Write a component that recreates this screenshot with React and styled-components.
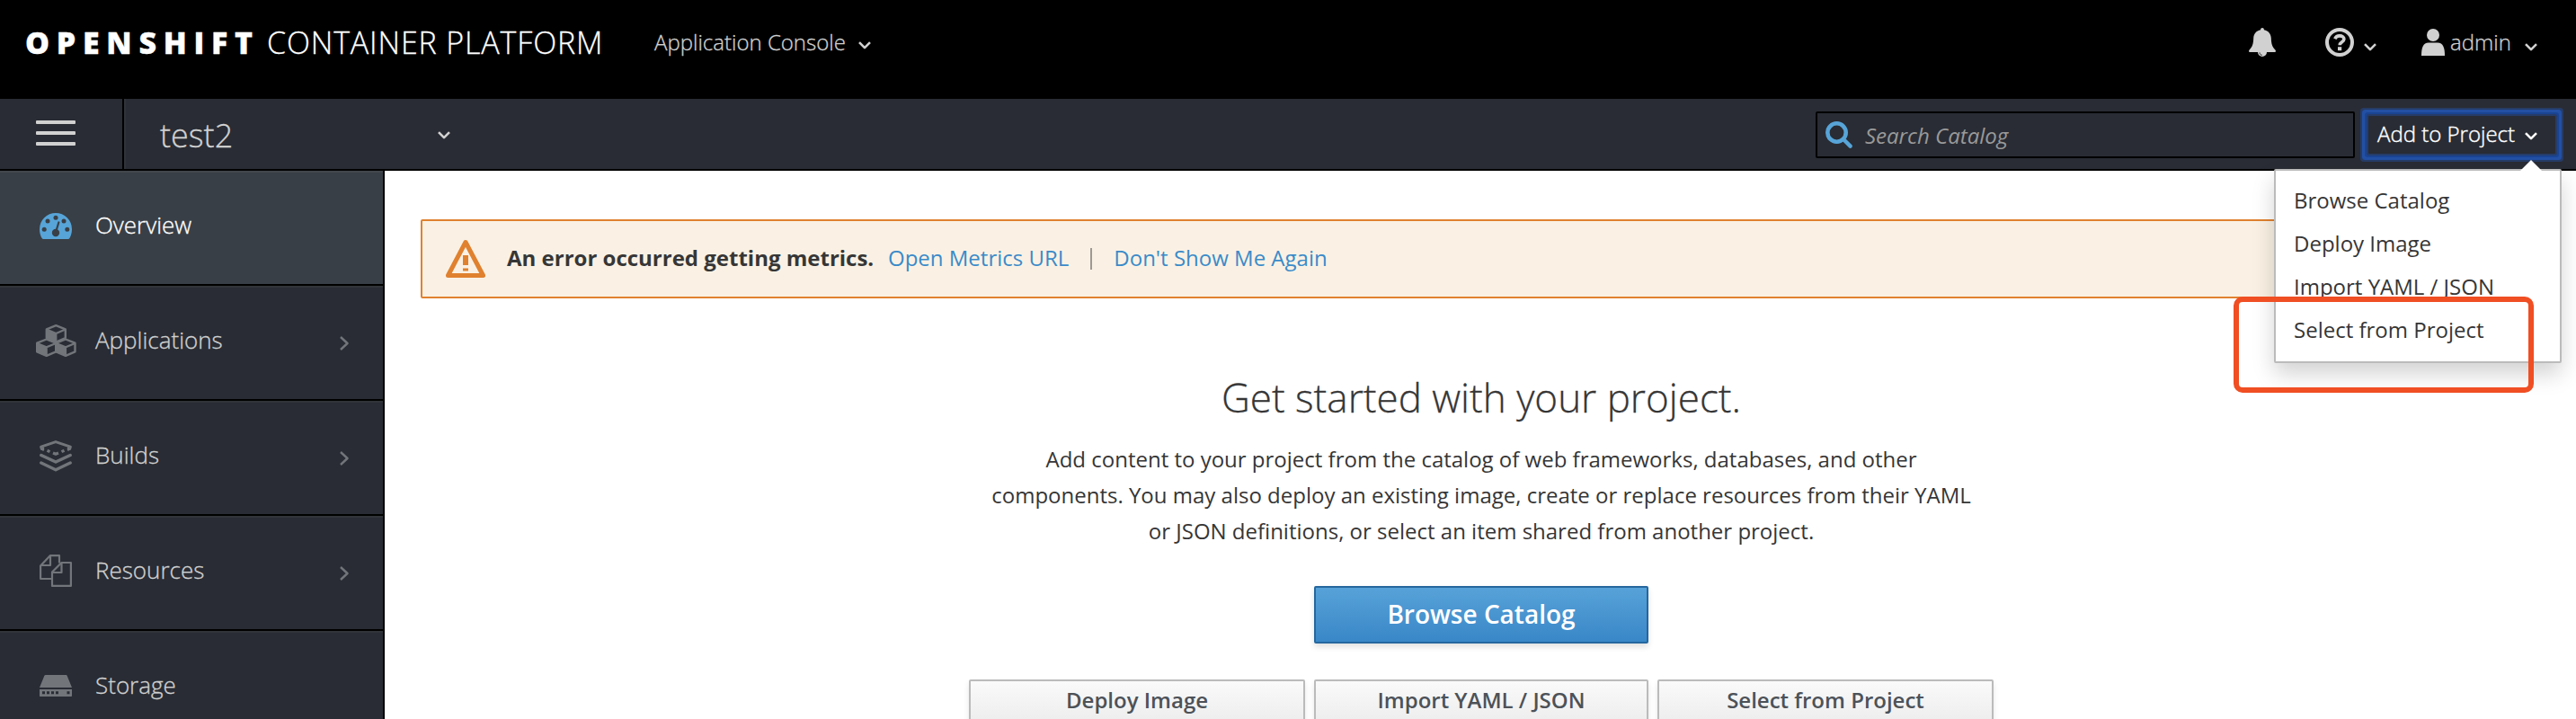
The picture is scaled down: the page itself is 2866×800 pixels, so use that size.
import React from "react";
import styled, { createGlobalStyle } from "styled-components";

const GlobalStyle = createGlobalStyle`
  *, *::before, *::after { box-sizing: border-box; }
  html, body { margin: 0; padding: 0; height: 100%; }
  body {
    overflow: hidden;
    background: #fff;
    color: #333;
    font-family: "Open Sans", "Noto Sans", sans-serif;
    font-size: 24px;
    line-height: 40px;
  }
  button, input { font: inherit; color: inherit; }
`;

const Page = styled.div`
  display: flex;
  flex-direction: column;
  height: 800px;
  overflow: hidden;
`;

const Masthead = styled.header`
  display: flex;
  align-items: center;
  flex: none;
  height: 110px;
  padding: 0 43px 16px 28px;
  background: #000;
  color: #d1d1d1;
  font-weight: 300;
  -webkit-text-stroke: 0.3px currentColor;
`;

const Brand = styled.div`
  display: flex;
  width: 700px;
  color: #fff;
  font-size: 34px;
  white-space: nowrap;
`;

const BrandStrong = styled.span`
  width: 269px;
  font-weight: 800;
  letter-spacing: 7.7px;
`;

const BrandLight = styled.span`
  font-weight: 300;
  letter-spacing: 0.85px;
`;

const ConsoleSwitch = styled.div`
  display: flex;
  align-items: center;
  gap: 14px;
  white-space: nowrap;
`;

const Utilities = styled.div`
  display: flex;
  align-items: center;
  margin-left: auto;
`;

const Utility = styled.div`
  display: flex;
  align-items: center;
  margin-left: ${(p) => p.$before || 0}px;
`;

const UserName = styled.span`
  width: 83px;
  margin-left: 6px;
`;

const Toolbar = styled.div`
  display: flex;
  align-items: center;
  flex: none;
  height: 80px;
  padding-right: 15px;
  background: #292c34;
  border-bottom: 2px solid #000;
`;

const MenuToggle = styled.div`
  display: flex;
  flex-direction: column;
  gap: 8px;
  width: 138px;
  height: 78px;
  padding: 24px 0 0 40px;
  border-right: 2px solid #000;
`;

const Bar = styled.span`
  width: 44px;
  height: 4px;
  border-radius: 1px;
  background: #d1d1d1;
`;

const ProjectPicker = styled.div`
  display: flex;
  align-items: center;
  justify-content: space-between;
  width: 363px;
  height: 78px;
  padding: 3px 0 0 38px;
  border-left: 2px solid #303339;
  color: #d1d1d1;
  font-size: 36px;
  font-weight: 300;
  -webkit-text-stroke: 0.3px currentColor;
`;

const SearchBox = styled.label`
  display: flex;
  align-items: center;
  width: 600px;
  height: 52px;
  margin: 2px 15px 0 auto;
  padding-left: 9px;
  border: 2px solid #000;
  border-radius: 2px;
`;

const SearchInput = styled.input`
  flex: 1;
  min-width: 0;
  height: 44px;
  margin-left: 14px;
  padding: 0;
  border: 0;
  outline: 0;
  background: transparent;
  &::placeholder { color: #999; font-style: italic; opacity: 1; }
`;

const AddWrap = styled.div`
  position: relative;
  width: 208px;
  margin: 2px 8px 0 0;
`;

const AddButton = styled.button`
  display: flex;
  align-items: center;
  justify-content: space-between;
  width: 208px;
  height: 42px;
  padding: 0 20px 2px 10px;
  border: 0;
  background: #292c34;
  color: #fff;
  white-space: nowrap;
  font-weight: 300;
  -webkit-text-stroke: 0.4px currentColor;
  box-shadow: 0 0 0 2px #263c68, 0 0 0 4px #1a4493, 0 0 0 7px #2350a4, 0 0 0 9px #263c66;
  border-radius: 1px;
`;

const Menu = styled.ul`
  position: absolute;
  z-index: 5;
  top: 59px;
  right: -7px;
  width: 320px;
  height: 216px;
  margin: 0;
  padding: 9px 0 11px 20px;
  list-style: none;
  background: #fff;
  border: 2px solid #bbb;
  border-radius: 2px;
  box-shadow: 0 12px 24px rgba(0, 0, 0, 0.175);
  color: #363636;
`;

const MenuArrow = styled.svg`
  position: absolute;
  top: -12px;
  right: 20px;
  display: block;
`;

const MenuItem = styled.li`
  height: 48px;
  line-height: 48px;
`;

const Highlight = styled.div`
  position: absolute;
  z-index: 6;
  top: 201px;
  left: -150px;
  width: 334px;
  height: 107px;
  border: 6px solid #f04e23;
  border-radius: 10px;
`;

const Body = styled.div`
  display: flex;
  flex: 1;
  min-height: 0;
`;

const Sidebar = styled.nav`
  flex: none;
  width: 428px;
  background: #292c34;
  border-right: 2px solid #000;
  overflow: hidden;
`;

const NavItem = styled.div`
  display: flex;
  align-items: center;
  height: 128px;
  padding: 0 38px 6px 36px;
  border-top: 2px solid ${(p) => (p.$active ? "#42474d" : "#313439")};
  border-bottom: 2px solid #000;
  background: ${(p) => (p.$active ? "#393f46" : "#292c34")};
  color: ${(p) => (p.$active ? "#fff" : "#d1d1d1")};
  font-size: 26px;
  font-weight: 300;
  -webkit-text-stroke: 0.3px currentColor;
`;

const NavIcon = styled.span`
  display: flex;
  align-items: center;
  justify-content: center;
  width: 52px;
  height: 40px;
  color: ${(p) => (p.$active ? "#57a4d8" : "#72767b")};
`;

const NavLabel = styled.span`
  flex: 1;
  margin: -2px 0 0 18px;
`;

const Chevron = styled.svg`
  margin-top: 5px;
`;

const Main = styled.main`
  flex: 1;
  min-width: 0;
  padding: 54px 40px 0;
`;

const Alert = styled.div`
  display: flex;
  align-items: center;
  height: 88px;
  padding-left: 26px;
  border: 2px solid #e0812f;
  border-radius: 2px;
  background: #faf1e4;
  white-space: nowrap;
`;

const AlertText = styled.strong`
  width: 424px;
  margin: -3px 0 0 24px;
  color: #363636;
  font-weight: 700;
`;

const AlertLink = styled.a`
  margin-top: -3px;
  color: #3a8bc9;
`;

const Divider = styled.span`
  width: 2px;
  height: 24px;
  margin: 0 24px 0 24px;
  background: #9c9893;
`;

const Hero = styled.section`
  width: 1142px;
  margin: 80px auto 0;
  padding-left: 2px;
  text-align: center;
  color: #363636;
`;

const HeroTitle = styled.h1`
  margin: 0 0 19px;
  font-size: 44px;
  font-weight: 300;
  line-height: 60px;
  -webkit-text-stroke: 0.3px currentColor;
`;

const HeroLine = styled.span`
  display: block;
  white-space: nowrap;
`;

const HeroText = styled.p`
  margin: 0 0 41px;
  line-height: 40px;
`;

const ActionGrid = styled.div`
  display: grid;
  grid-template-columns: 374px 372px 374px;
  justify-content: center;
  column-gap: 10px;
`;

const PrimaryRow = styled(ActionGrid)`
  margin-bottom: 40px;
`;

const PrimaryButton = styled.button`
  grid-column: 2;
  height: 64px;
  padding: 0 0 2px;
  border: 2px solid #25679e;
  border-radius: 2px;
  background: linear-gradient(#57a2d8, #3a87c8);
  box-shadow: 0 4px 6px rgba(3, 3, 3, 0.12);
  color: #fff;
  font-size: 28px;
  font-weight: 600;
`;

const SecondaryButton = styled.button`
  height: 56px;
  padding: 0 0 11px;
  border: 2px solid #bbb;
  border-radius: 2px;
  background: linear-gradient(#fafafa, #ebebeb);
  box-shadow: 0 4px 6px rgba(3, 3, 3, 0.1);
  color: #4d5258;
  font-weight: 600;
`;

const CaretSvg = styled.svg`
  flex: none;
  margin-top: ${(p) => p.$drop}px;
  margin-left: ${(p) => p.$before}px;
`;

function Caret({ drop = 0, before = 0 }) {
  return (
    <CaretSvg $drop={drop} $before={before} width="14" height="9" viewBox="0 0 14 9" fill="none" stroke="currentColor" strokeWidth="2.6">
      <path d="M1 1.2 7 7.2 13 1.2" strokeLinejoin="round" />
    </CaretSvg>
  );
}

const BellIcon = () => (
  <svg width="30" height="32" viewBox="0 0 30 32" fill="currentColor">
    <path d="M15 0c1.2 0 2 .9 1.9 2.2C21.8 3 24.6 6.800 24.800 11.500 25 18 26.200 21.500 29.400 24.400 30.400 25.500 30 27 28.600 27H20a5 5 0 0 1-10 0H1.400C0 27-.4 25.500.6 24.400 3.800 21.500 5 18 5.200 11.500 5.400 6.800 8.200 3 13.100 2.200 13 .9 13.800 0 15 0z" />
    <path d="M12 27.400c0 1.800 1.200 2.900 2.800 2.900" fill="none" stroke="#000" strokeWidth="0.800" />
  </svg>
);

const HelpIcon = () => (
  <svg width="32" height="32" viewBox="0 0 32 32" fill="none" stroke="currentColor">
    <circle cx="16" cy="16" r="14" strokeWidth="4" />
    <path d="M10.800 12.200C11.800 9.800 13.600 8.900 16 8.900c2.900 0 4.900 1.500 4.900 3.700 0 3.400-4.700 3-4.700 6.700" strokeWidth="3.600" />
    <path d="M14 21.200h4.200v4h-4.200z" fill="currentColor" stroke="none" />
  </svg>
);

const UserIcon = () => (
  <svg width="26" height="30" viewBox="0 0 26 30" fill="currentColor">
    <ellipse cx="13" cy="7" rx="7" ry="7" />
    <path d="M0 30c0-9 1.800-14.500 8-14.500h10c6.200 0 8 5.500 8 14.500z" />
  </svg>
);

const SearchIcon = () => (
  <svg width="30" height="30" viewBox="0 0 30 30" fill="none" stroke="#57a4d8">
    <circle cx="12.500" cy="12.500" r="10.200" strokeWidth="4.600" />
    <path d="M20 20 27.600 27.600" strokeWidth="4.400" strokeLinecap="round" />
  </svg>
);

const WarningIcon = () => (
  <svg width="44" height="44" viewBox="0 0 44 44" fill="none" stroke="#e0812f">
    <path d="M22 3.500 41.500 40.500H2.500z" strokeWidth="5" strokeLinejoin="round" />
    <path d="M19 18h6v11h-6zM19 32.500h6v3h-6z" fill="#e0812f" stroke="none" />
  </svg>
);

const GaugeIcon = () => (
  <svg width="36" height="29" viewBox="0 0 36 29" fill="currentColor">
    <path d="M18 0a18 18 0 0 1 18 18c0 4-1.100 7.500-2.600 10-.4.700-.9 1-1.700 1H4.300c-.8 0-1.300-.3-1.700-1C1.100 25.500 0 22 0 18A18 18 0 0 1 18 0z" />
    <g fill="#393f46">
      <circle cx="18" cy="5.200" r="2.500" />
      <circle cx="9" cy="9" r="2.500" />
      <circle cx="27" cy="9" r="2.500" />
      <circle cx="5.200" cy="18.200" r="2.500" />
      <circle cx="30.800" cy="18.200" r="2.500" />
      <circle cx="18" cy="22" r="4.200" />
    </g>
    <path d="M18.500 20 21.300 10.500" stroke="#393f46" strokeWidth="2.200" strokeLinecap="round" />
  </svg>
);

const Cube = ({ x, y }) => (
  <g transform={`translate(${x} ${y})`}>
    <path d="M11.500 1 22 5.200v9.600L11.500 19.300 1 14.800V5.200z" fill="none" stroke="currentColor" strokeWidth="2.4" strokeLinejoin="round" />
    <path d="M1 5.200 11.500 9.800v9.500L1 14.800z" fill="currentColor" />
    <path d="M1 5.400 11.500 9.800 22 5.400M11.500 9.800v9" fill="none" stroke="currentColor" strokeWidth="2.2" />
  </g>
);

const CubesIcon = () => (
  <svg width="45" height="36" viewBox="0 0 45 36">
    <Cube x={10.800} y={0.200} />
    <Cube x={0.200} y={15.500} />
    <Cube x={21.500} y={15.500} />
  </svg>
);

const LayersIcon = () => (
  <svg width="36" height="35" viewBox="0 0 36 35" fill="none" stroke="currentColor" strokeWidth="3" strokeLinecap="round" strokeLinejoin="round">
    <path d="M2.400 9.500 1.700 7.200 18 1.600 34.300 7.200 33.600 9.500" />
    <path d="M8.500 11.200 11.500 12.600M15 14 18 15.200 21 14M24.500 12.600 27.500 11.200" strokeLinecap="butt" strokeWidth="3.200" />
    <path d="M4 8.500v2M32 8.500v2" strokeWidth="2.400" />
    <path d="M1.800 16.500 18 24 34.200 16.500" strokeWidth="3.400" />
    <path d="M1.800 25 18 32.700 34.200 25" strokeWidth="3.400" />
  </svg>
);

const FilesIcon = () => (
  <svg width="36" height="36" viewBox="0 0 36 36" fill="none" stroke="currentColor" strokeWidth="2.2" strokeLinejoin="round">
    <path d="M13 27H1.100V12.500L12 1.100h10v8.400" />
    <path d="M12 1v11H1" />
    <path d="M24.500 9h10.400v25.900H14V19.500z" />
    <path d="M24.500 9v11H14" />
  </svg>
);

const DriveIcon = () => (
  <svg width="36" height="24" viewBox="0 0 36 24" fill="currentColor">
    <path d="M6.800 0h22.400c.8 0 1.200.4 1.500 1L36 14H0L5.300 1c.3-.6.700-1 1.500-1zM0 16h36v7c0 .6-.4 1-1 1H1c-.6 0-1-.4-1-1z" />
    <path d="M3 18.200h3v3H3zM8 18.200h3v3H8zM13 18.200h3v3h-3zM18 18.200h3v3h-3zM30.500 18.200h3v3h-3z" fill="#292c34" />
  </svg>
);

const NAV = [
  { label: "Overview", icon: GaugeIcon, active: true },
  { label: "Applications", icon: CubesIcon, children: true },
  { label: "Builds", icon: LayersIcon, children: true },
  { label: "Resources", icon: FilesIcon, children: true },
  { label: "Storage", icon: DriveIcon },
];

const ADD_OPTIONS = ["Browse Catalog", "Deploy Image", "Import YAML / JSON", "Select from Project"];

const INTRO = [
  "Add content to your project from the catalog of web frameworks, databases, and other",
  "components. You may also deploy an existing image, create or replace resources from their YAML",
  "or JSON definitions, or select an item shared from another project.",
];

export default function App() {
  return (
    <>
      <GlobalStyle />
      <Page>
        <Masthead>
          <Brand>
            <BrandStrong>OPENSHIFT</BrandStrong>
            <BrandLight>CONTAINER PLATFORM</BrandLight>
          </Brand>
          <ConsoleSwitch>
            Application Console
            <Caret drop={6} />
          </ConsoleSwitch>
          <Utilities>
            <Utility>
              <BellIcon />
            </Utility>
            <Utility $before={55}>
              <HelpIcon />
              <Caret drop={10} before={11} />
            </Utility>
            <Utility $before={50}>
              <UserIcon />
              <UserName>admin</UserName>
              <Caret drop={10} />
            </Utility>
          </Utilities>
        </Masthead>

        <Toolbar>
          <MenuToggle>
            <Bar />
            <Bar />
            <Bar />
          </MenuToggle>
          <ProjectPicker>
            test2
            <Caret />
          </ProjectPicker>
          <SearchBox>
            <SearchIcon />
            <SearchInput placeholder="Search Catalog" />
          </SearchBox>
          <AddWrap>
            <AddButton>
              Add to Project
              <Caret drop={5} />
            </AddButton>
            <Menu>
              <MenuArrow width="24" height="12" viewBox="0 0 24 12">
                <path d="M0 12 12 0 24 12z" fill="#fff" />
              </MenuArrow>
              {ADD_OPTIONS.map((option) => (
                <MenuItem key={option}>{option}</MenuItem>
              ))}
            </Menu>
            <Highlight />
          </AddWrap>
        </Toolbar>

        <Body>
          <Sidebar>
            {NAV.map(({ label, icon: Icon, active, children }) => (
              <NavItem key={label} $active={active}>
                <NavIcon $active={active}>
                  <Icon />
                </NavIcon>
                <NavLabel>{label}</NavLabel>
                {children && (
                  <Chevron width="10" height="16" viewBox="0 0 10 16" fill="none" stroke="#72767b" strokeWidth="2.400">
                    <path d="M1 1 8.500 8 1 15" strokeLinejoin="round" />
                  </Chevron>
                )}
              </NavItem>
            ))}
          </Sidebar>

          <Main>
            <Alert>
              <WarningIcon />
              <AlertText>An error occurred getting metrics.</AlertText>
              <AlertLink>Open Metrics URL</AlertLink>
              <Divider />
              <AlertLink>Don't Show Me Again</AlertLink>
            </Alert>
            <Hero>
              <HeroTitle>Get started with your project.</HeroTitle>
              <HeroText>
                {INTRO.map((line) => (
                  <HeroLine key={line}>{line}</HeroLine>
                ))}
              </HeroText>
              <PrimaryRow>
                <PrimaryButton>Browse Catalog</PrimaryButton>
              </PrimaryRow>
              <ActionGrid>
                <SecondaryButton>Deploy Image</SecondaryButton>
                <SecondaryButton>Import YAML / JSON</SecondaryButton>
                <SecondaryButton>Select from Project</SecondaryButton>
              </ActionGrid>
            </Hero>
          </Main>
        </Body>
      </Page>
    </>
  );
}
